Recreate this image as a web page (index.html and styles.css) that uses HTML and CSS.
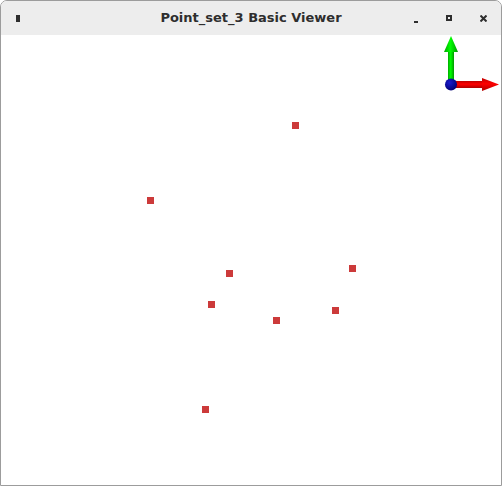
FILE: index.html
```html
<!DOCTYPE html>
<html>
<head>
<meta charset="utf-8">
<link rel="stylesheet" href="styles.css">
</head>
<body>
<div class="window">
  <div class="titlebar">
    <div class="menu-btn"><span class="menu-glyph"></span></div>
    <div class="title">Point_set_3 Basic Viewer</div>
    <div class="controls">
      <span class="ctl ctl-min"></span>
      <span class="ctl ctl-max"></span>
      <svg class="ctl-close" width="7" height="7" viewBox="0 0 7 7"><path d="M0.5 0.5 L6.5 6.5 M6.5 0.5 L0.5 6.5" stroke="#2e2e2e" stroke-width="2"/></svg>
    </div>
  </div>
  <svg class="viewport" width="500" height="450" viewBox="1 35 500 450">
    <defs>
      <linearGradient id="g" x1="0" y1="0" x2="1" y2="0">
        <stop offset="0" stop-color="#00a800"/>
        <stop offset="0.45" stop-color="#00ff00"/>
        <stop offset="1" stop-color="#009800"/>
      </linearGradient>
      <linearGradient id="r" x1="0" y1="0" x2="0" y2="1">
        <stop offset="0" stop-color="#c00000"/>
        <stop offset="0.45" stop-color="#ff0000"/>
        <stop offset="1" stop-color="#b00000"/>
      </linearGradient>
      <radialGradient id="b" cx="0.4" cy="0.35" r="0.7">
        <stop offset="0" stop-color="#1a1ad0"/>
        <stop offset="1" stop-color="#000070"/>
      </radialGradient>
    </defs>
    <rect x="292" y="122" width="7" height="7" class="pt"/>
    <rect x="147" y="197" width="7" height="7" class="pt"/>
    <rect x="226" y="270" width="7" height="7" class="pt"/>
    <rect x="349" y="265" width="7" height="7" class="pt"/>
    <rect x="208" y="301" width="7" height="7" class="pt"/>
    <rect x="273" y="317" width="7" height="7" class="pt"/>
    <rect x="332" y="307" width="7" height="7" class="pt"/>
    <rect x="202" y="406" width="7" height="7" class="pt"/>
    <!-- green axis -->
    <rect x="448" y="50" width="6" height="34" fill="url(#g)"/>
    <polygon points="451,36 458,52 444,52" fill="url(#g)"/>
    <!-- red axis -->
    <rect x="451" y="81" width="33" height="7" fill="url(#r)"/>
    <polygon points="499,84.5 482,78 482,91" fill="url(#r)"/>
    <circle cx="451" cy="84.5" r="6" fill="url(#b)"/>
  </svg>
</div>
</body>
</html>
```
FILE: styles.css
```css
html, body {
  margin: 0;
  padding: 0;
  background: #ffffff;
}
.window {
  width: 500px;
  height: 484px;
  border: 1px solid #9c9c9c;
  border-radius: 7px 7px 0 0;
  overflow: hidden;
  background: #ffffff;
  display: flex;
  flex-direction: column;
}
.titlebar {
  height: 34px;
  background: #ededed;
  display: flex;
  align-items: center;
  position: relative;
  flex: none;
}
.menu-btn {
  width: 40px;
  display: flex;
  padding-left: 15px;
  box-sizing: border-box;
}
.menu-glyph {
  width: 4px;
  height: 7px;
  background: #2e2e2e;
  margin-top: 0;
}
.title {
  position: absolute;
  left: 0;
  right: 0;
  top: 0;
  line-height: 34px;
  text-align: center;
  font-family: "DejaVu Sans", sans-serif;
  font-weight: bold;
  font-size: 13px;
  color: #2e2e2e;
  pointer-events: none;
}
.controls {
  margin-left: auto;
  display: flex;
  align-items: center;
  gap: 0;
  position: relative;
}
.ctl {
  display: block;
  box-sizing: border-box;
}
.ctl-min {
  width: 4px;
  height: 2px;
  background: #2e2e2e;
  margin-top: 7px;
  margin-right: 28px;
}
.ctl-max {
  width: 6px;
  height: 6px;
  border: 2px solid #2e2e2e;
  margin-right: 28px;
}
.ctl-close {
  display: block;
  margin-right: 14px;
}
.viewport {
  display: block;
  flex: none;
}
.pt {
  fill: #cc3a3a;
}
```
